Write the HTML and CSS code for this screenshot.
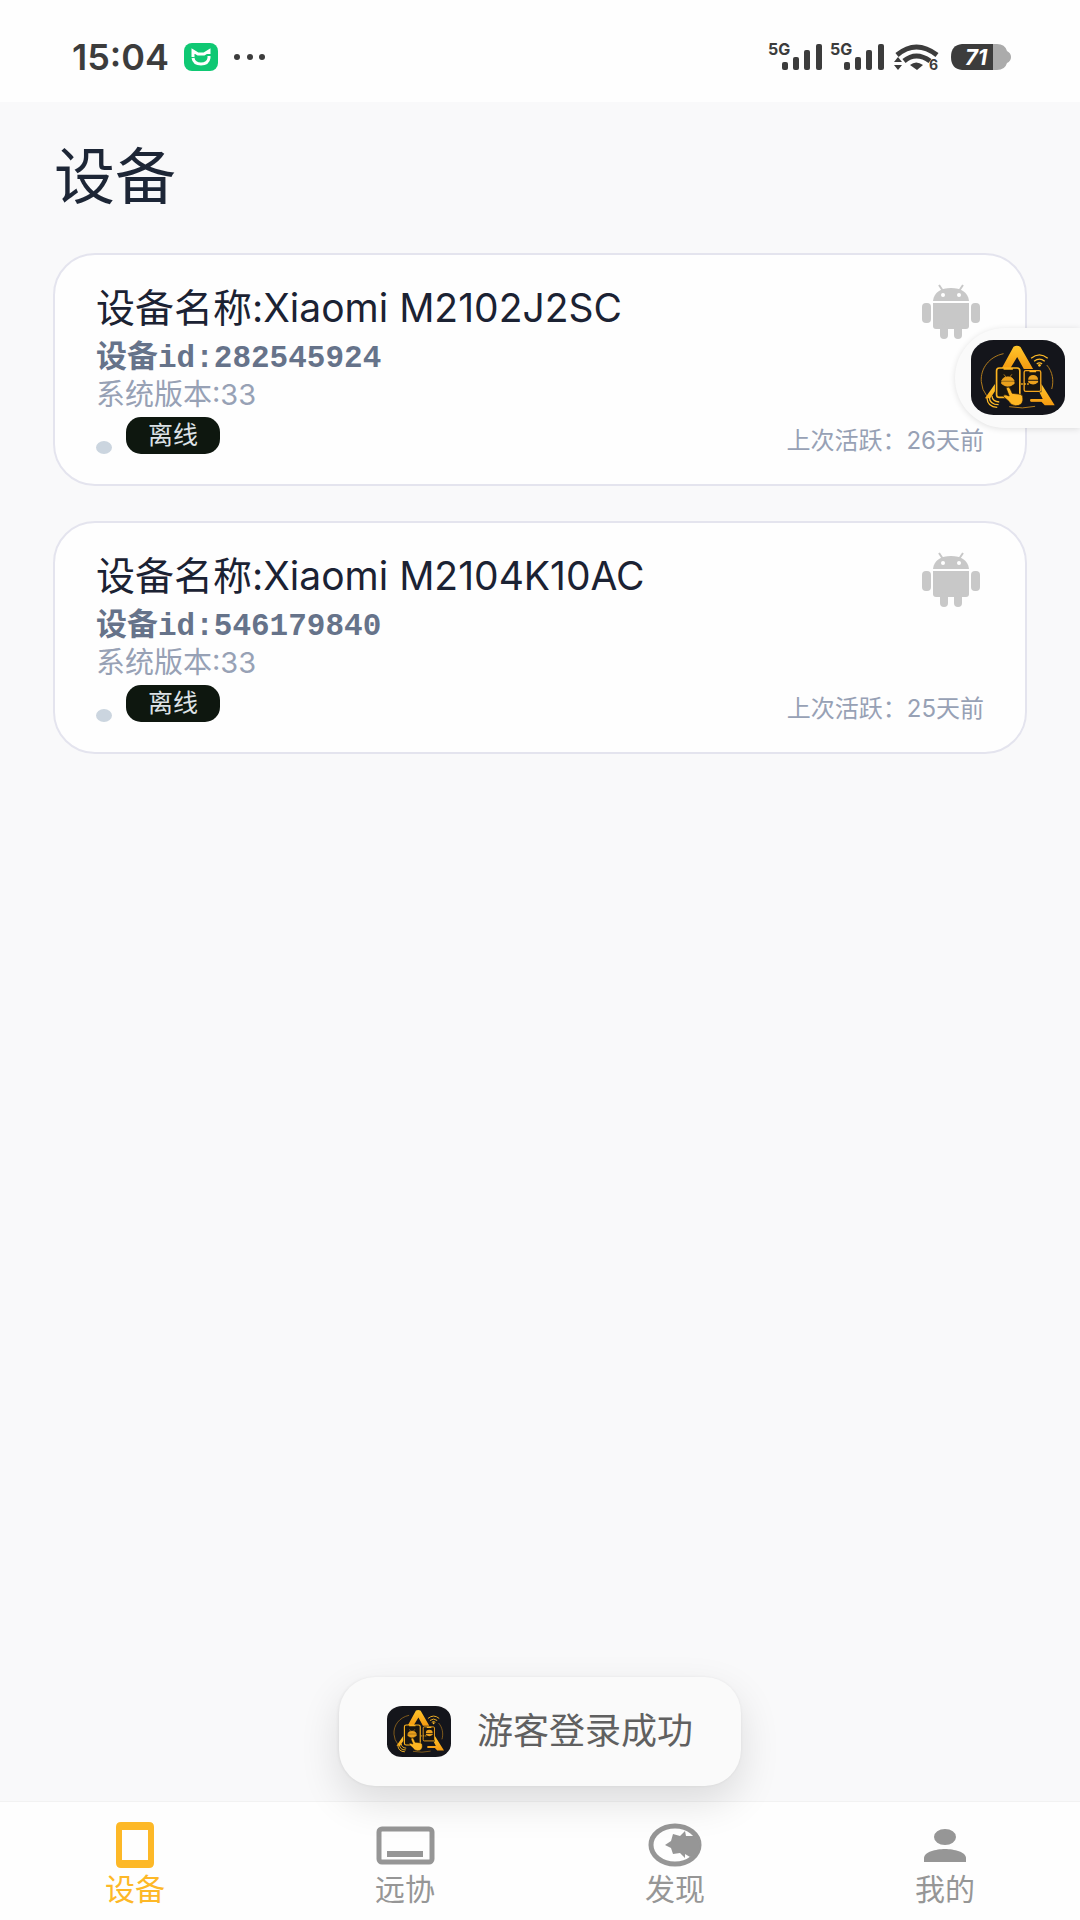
FILE: index.html
```html
<!DOCTYPE html>
<html lang="zh-CN">
<head>
<meta charset="utf-8">
<meta name="viewport" content="width=device-width, initial-scale=1">
<title>设备</title>
<link rel="stylesheet" href="styles.css">
</head>
<body>
<svg class="defs" aria-hidden="true">
  <defs>
    <linearGradient id="gold" x1="0" y1="0" x2="0" y2="1">
      <stop offset="0" stop-color="#ffc62b"/>
      <stop offset="1" stop-color="#f59a10"/>
    </linearGradient>
    <symbol id="logo" viewBox="0 0 283 225" preserveAspectRatio="none">
      <rect width="283" height="225" rx="68" ry="58" fill="#14151b"/>
      <path d="M98 41C55 50 28 85 31 125q2 25 16 42M228 75c18 20 22 48 15 72M115 200q40 8 78-1" fill="none" stroke="#b07a1c" stroke-width="3"/>
      <path d="M128 20q11-6 21 1l38 66h-28l-20-36-20 33H93z" fill="url(#gold)"/>
      <path d="M72 132v22l-14 21H42zM212 132l40 64h-30l-10-11h-32v-8h36l-10-20h6z" fill="url(#gold)"/>
      <path d="M178 181h36" stroke="#f5a21a" stroke-width="6"/>
      <rect x="77" y="84" width="70" height="88" rx="8" fill="#191611" stroke="#fdb41f" stroke-width="5"/>
      <rect x="160" y="92" width="50" height="62" rx="5" fill="#191611" stroke="#f3a51d" stroke-width="4"/>
      <path d="M98 84h28v5H98zM176 92h20v5h-20z" fill="#fdb41f"/>
      <path d="M92 122a20 17 0 0 1 38 0zM92 125h38v6q-19 16-38 0zM99 103l6 8M123 103l-6 8" fill="#eba11d" stroke="#eba11d" stroke-width="2"/>
      <path d="M172 119a15 14 0 0 1 30 0zM172 122h30v5q-15 13-30 0z" fill="#eba11d"/>
      <path d="M151 132h24" stroke="#fdb41f" stroke-width="4" stroke-dasharray="5 4"/>
      <path d="M106 145q6-8 12 1l6 14 26 3q8 4 6 18-3 17-22 16-13 0-20-13l-16-14q-1-8 8-5l9 3z" fill="#ffb722" stroke="#281b0b" stroke-width="2"/>
      <g fill="none" stroke="#ffba25" stroke-width="4">
        <path d="M181 55q25-21 50 0M190 64q16-13 32 0M198 72q8-7 16 0"/>
        <path d="M63 167q1 17 22 19M55 170q1 24 28 24M48 174q2 27 31 28"/>
      </g>
      <circle cx="206" cy="76" r="4" fill="#ffba25"/>
    </symbol>
    <symbol id="android" viewBox="0 0 60 56">
      <g fill="#c8c8c8">
        <path d="M12 17C13 8 20 4 30 4s17 4 18 13z"/>
        <path d="M12 19h36v23q0 3-3 3H15q-3 0-3-3z"/>
        <rect x="1" y="19" width="9" height="20" rx="4"/>
        <rect x="50" y="19" width="9" height="20" rx="4"/>
        <rect x="19" y="40" width="8" height="15" rx="4"/>
        <rect x="33" y="40" width="8" height="15" rx="4"/>
      </g>
      <path d="M18 1l4 6M42 1l-4 6" stroke="#c8c8c8" stroke-width="2"/>
      <circle cx="22" cy="11" r="2" fill="#fff"/>
      <circle cx="38" cy="11" r="2" fill="#fff"/>
    </symbol>
    <symbol id="bars" viewBox="0 0 42 30">
      <rect x="1" y="20" width="6" height="8" rx="2"/>
      <rect x="12" y="15" width="6" height="13" rx="2"/>
      <rect x="23" y="8" width="6" height="20" rx="2"/>
      <rect x="35" y="2" width="6" height="26" rx="2"/>
    </symbol>
  </defs>
</svg>

<div class="statusbar">
  <div class="status-left">
    <span class="clock">15:04</span>
    <svg width="34" height="28" viewBox="0 0 34 28">
      <rect width="34" height="28" rx="8" fill="#0fc873"/>
      <path d="M9 14V8l5 3h6l5-3v3" fill="none" stroke="#fff" stroke-width="3"/>
      <path d="M9 15q1 6 8 6t8-6v-2" fill="none" stroke="#fff" stroke-width="3"/>
    </svg>
    <svg width="34" height="28" viewBox="0 0 34 28" fill="#3c3c3c">
      <circle cx="4" cy="14" r="3"/><circle cx="17" cy="14" r="3"/><circle cx="29" cy="14" r="3"/>
    </svg>
  </div>
  <div class="status-right">
    <div class="signal"><span class="network">5G</span><svg width="42" height="30"><use href="#bars"/></svg></div>
    <div class="signal"><span class="network">5G</span><svg width="42" height="30"><use href="#bars"/></svg></div>
    <svg width="48" height="30" viewBox="-2 0 48 30">
      <g fill="none" stroke="#3c3c3c" stroke-width="5">
        <path d="M3 13Q22-3 43 13"/>
        <path d="M10 19q12-10 26 0"/>
      </g>
      <path d="M16 23q6-5 13 0l-6 5z"/>
      <path d="M0 20l4-5 4 5zM0 23l4 5 4-5z"/>
      <text x="35" y="28" class="wifi-gen">6</text>
    </svg>
    <svg width="64" height="30" viewBox="-3 1 64 30">
      <path d="M43 3h4q8 0 10 7 4 2 4 6t-4 6q-2 7-10 7h-4z" fill="#ababab"/>
      <path d="M43 3H12Q1 4 1 16t11 13h31z"/>
      <text x="15" y="24" class="charge">71</text>
    </svg>
  </div>
</div>

<main class="page">
  <h1 class="title">设备</h1>
  <ul class="devices">
    <li class="card">
      <div class="card-head">
        <h2 class="name">设备名称:Xiaomi M2102J2SC</h2>
        <svg width="60" height="56"><use href="#android"/></svg>
      </div>
      <p class="device-id">设备id:282545924</p>
      <p class="version">系统版本:33</p>
      <div class="card-foot">
        <span class="dot"></span>
        <span class="badge">离线</span>
        <span class="active-time">上次活跃：26天前</span>
      </div>
    </li>
    <li class="card">
      <div class="card-head">
        <h2 class="name">设备名称:Xiaomi M2104K10AC</h2>
        <svg width="60" height="56"><use href="#android"/></svg>
      </div>
      <p class="device-id">设备id:546179840</p>
      <p class="version">系统版本:33</p>
      <div class="card-foot">
        <span class="dot"></span>
        <span class="badge">离线</span>
        <span class="active-time">上次活跃：25天前</span>
      </div>
    </li>
  </ul>
</main>

<nav class="tabs">
  <a class="tab current" href="#devices" aria-current="page">
    <svg width="60" height="48" viewBox="0 0 60 48"><path fill-rule="evenodd" fill="currentColor" d="M16 2h28q5 0 5 5v36q0 5-5 5H16q-5 0-5-5V7q0-5 5-5zM17 10v30h26V10z"/></svg>
    <span>设备</span>
  </a>
  <a class="tab" href="#remote">
    <svg width="60" height="48" viewBox="0 0 60 48"><rect x="4" y="9" width="53" height="33" rx="3" fill="none" stroke="currentColor" stroke-width="5"/><path d="M12 31h36v6H12z" fill="currentColor"/></svg>
    <span>远协</span>
  </a>
  <a class="tab" href="#discover">
    <svg width="60" height="48" viewBox="0 0 60 48"><ellipse cx="30" cy="25" rx="24" ry="19" fill="none" stroke="currentColor" stroke-width="5"/><path fill="currentColor" d="M20 25l6-4 2-7 7 2 5-5 1 5h9q6 9 4 14-2 6-9 7l-5-3v4l-5-5-7 1-2-6z"/></svg>
    <span>发现</span>
  </a>
  <a class="tab" href="#me">
    <svg width="60" height="48" viewBox="0 0 60 48" fill="currentColor"><ellipse cx="30" cy="17" rx="11" ry="8"/><path d="M9 42v-4c0-6 12-9 21-9s21 3 21 9v4z"/></svg>
    <span>我的</span>
  </a>
</nav>

<button class="floater" type="button" aria-label="悬浮按钮"><svg width="94" height="75"><use href="#logo"/></svg></button>

<div class="toast" role="status">
  <svg width="64" height="51"><use href="#logo"/></svg>
  <span>游客登录成功</span>
</div>
</body>
</html>
```
FILE: styles.css
```css
* {
  box-sizing: border-box;
}

body {
  position: relative;
  display: flex;
  flex-direction: column;
  min-height: 100vh;
  margin: 0;
  background: #f9f9fa;
  color: #1b2233;
  font-family: Inter, "Noto Sans CJK SC", sans-serif;
}

h1, h2, p, ul {
  margin: 0;
  padding: 0;
  font-weight: 400;
}

svg {
  display: block;
  flex: none;
}

.defs {
  position: absolute;
  width: 0;
  height: 0;
}

/* Status bar */
.statusbar {
  display: flex;
  justify-content: space-between;
  align-items: center;
  height: 102px;
  padding: 11px 69px 0 72px;
  background: #fefefe;
  color: #3c3c3c;
}

.status-left {
  display: flex;
  align-items: center;
  gap: 15px;
}

.clock {
  font-size: 36px;
  line-height: 40px;
  font-weight: 600;
}

.status-right {
  display: flex;
  align-items: center;
  gap: 7px;
  fill: #3c3c3c;
}

.signal {
  display: flex;
  width: 55px;
}

/* The bars tuck in under the network label */
.network {
  width: 13px;
  font-size: 16px;
  line-height: 14px;
  font-weight: 700;
  white-space: nowrap;
}

.wifi-gen {
  font-size: 14px;
  font-weight: 700;
}

.charge {
  fill: #fff;
  font-size: 22px;
  font-style: italic;
  font-weight: 700;
}

/* Device list */
.page {
  flex: 1;
  padding: 39px 53px;
}

.title {
  margin-bottom: 40px;
  padding-left: 1px;
  color: #1d2636;
  font-size: 61px;
  line-height: 72px;
  font-weight: 400;
}

.devices {
  display: flex;
  flex-direction: column;
  gap: 35px;
  list-style: none;
}

.card {
  padding: 29px 41px 30px;
  border: 2px solid #e4e4ee;
  border-radius: 42px;
  background: #fefefe;
}

.card-head {
  display: flex;
  justify-content: space-between;
  height: 48px;
  margin-bottom: 9px;
  padding-right: 3px;
}

.name {
  font-size: 39px;
  line-height: 48px;
}

.device-id {
  color: #66738a;
  font-family: "Liberation Mono", "Noto Sans CJK SC", monospace;
  font-size: 31px;
  line-height: 36px;
  font-weight: 700;
}

.version {
  margin-bottom: 4px;
  color: #97a1b5;
  font-size: 29px;
  line-height: 36px;
}

.card-foot {
  display: flex;
  align-items: flex-end;
}

.dot {
  width: 16px;
  height: 13px;
  margin-right: 14px;
  border-radius: 50%;
  background: #cbd5df;
}

.badge {
  padding: 0 22px;
  border-radius: 15px;
  background: #0e170f;
  color: #dde2e6;
  font-size: 25px;
  line-height: 37px;
}

.active-time {
  margin-left: auto;
  color: #97a1b5;
  font-size: 24px;
  line-height: 26px;
}

/* Bottom tabs */
.tabs {
  display: grid;
  grid-template-columns: repeat(4, 1fr);
  padding: 18px 0 13px;
  border-top: 1px solid #f2f2f2;
  background: #fefefe;
}

.tab {
  display: flex;
  flex-direction: column;
  align-items: center;
  gap: 3px;
  color: #969696;
  font-size: 30px;
  line-height: 36px;
  text-decoration: none;
}

.tab.current {
  color: #fdb827;
}

/* Overlays */
.floater {
  position: absolute;
  top: 328px;
  right: 0;
  padding: 12px 15px 13px 16px;
  border: 0;
  border-radius: 50px 0 0 50px;
  background: #fafafa;
  box-shadow: 0 1px 6px rgba(0, 0, 0, 0.12);
}

.toast {
  position: absolute;
  bottom: 134px;
  left: 50%;
  display: flex;
  align-items: center;
  gap: 26px;
  padding: 29px 48px;
  border-radius: 36px;
  background: #fafafa;
  box-shadow: 0 16px 40px rgba(0, 0, 0, 0.12), 0 0 3px rgba(0, 0, 0, 0.06);
  color: #606060;
  font-size: 36px;
  line-height: 51px;
  white-space: nowrap;
  transform: translateX(-50%);
}
```
